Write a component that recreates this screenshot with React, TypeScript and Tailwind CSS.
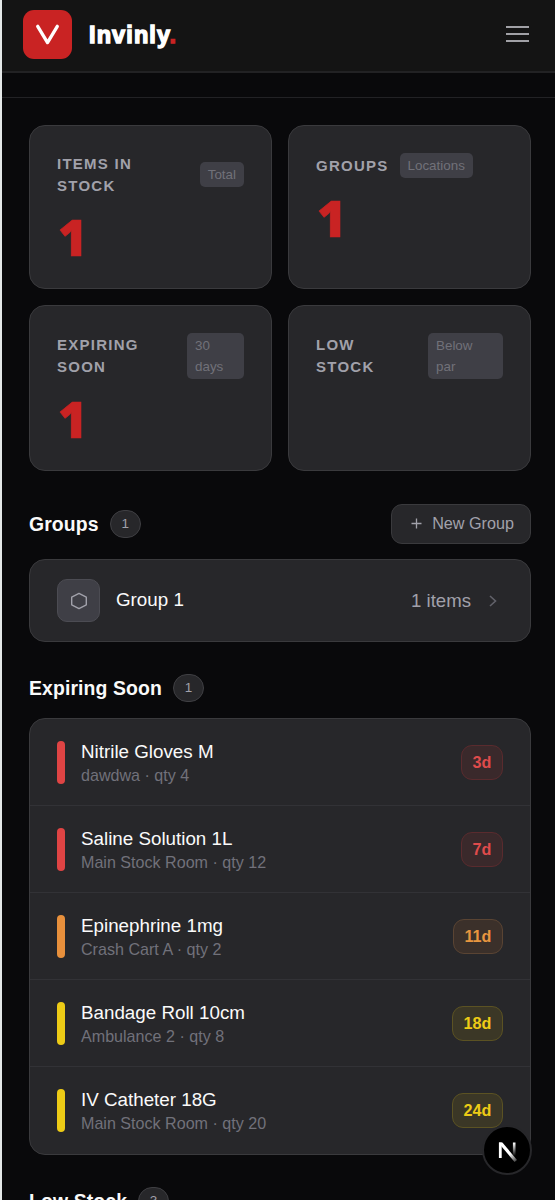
import React from 'react';

interface Stat {
  label: string;
  chip: string;
  value: string;
  chipClass: string;
}

interface ExpiringItem {
  name: string;
  location: string;
  qty: number;
  days: number;
}

interface SectionTitleProps {
  title: string;
  count: number;
}

const stats: Stat[] = [
  { label: 'Items in Stock', chip: 'Total', value: '1', chipClass: '-mt-[2px]' },
  { label: 'Groups', chip: 'Locations', value: '1', chipClass: '' },
  { label: 'Expiring Soon', chip: '30 days', value: '1', chipClass: 'w-[57px]' },
  { label: 'Low Stock', chip: 'Below par', value: '', chipClass: 'w-[75px]' },
];

const expiring: ExpiringItem[] = [
  { name: 'Nitrile Gloves M', location: 'dawdwa', qty: 4, days: 3 },
  { name: 'Saline Solution 1L', location: 'Main Stock Room', qty: 12, days: 7 },
  { name: 'Epinephrine 1mg', location: 'Crash Cart A', qty: 2, days: 11 },
  { name: 'Bandage Roll 10cm', location: 'Ambulance 2', qty: 8, days: 18 },
  { name: 'IV Catheter 18G', location: 'Main Stock Room', qty: 20, days: 24 },
];

const urgency = (days: number) => {
  if (days <= 7) {
    return {
      bar: 'bg-[#df4444]',
      badge: 'text-[#df4b4b] bg-[#3a292b] border-[#5a2b2e]',
    };
  }
  if (days <= 14) {
    return {
      bar: 'bg-[#e8903c]',
      badge: 'text-[#e8963f] bg-[#3b302a] border-[#5a4433]',
    };
  }
  return {
    bar: 'bg-[#edcb16]',
    badge: 'text-[#edcb16] bg-[#3b3726] border-[#5b5223]',
  };
};

const Header: React.FC = () => (
  <header className="flex h-[73px] shrink-0 items-center justify-between border-b-2 border-[#222224] bg-[#141414] pl-[21px] pr-[26px]">
    <div className="flex items-center gap-[17px] pb-[2px]">
      <div className="flex size-[49px] items-center justify-center rounded-[11px] bg-[#c92323]">
        <svg width="49" height="49" viewBox="0 0 49 49" fill="none">
          <path
            d="M14.7 16.3L24.5 32.6L34.3 16.3"
            stroke="#fff"
            strokeWidth="3.3"
            strokeLinecap="round"
            strokeLinejoin="round"
          />
        </svg>
      </div>
      <span className="pt-[3px] text-[23.5px] font-bold leading-none tracking-[1.1px] text-white [-webkit-text-stroke:1.4px_currentColor]">
        Invinly<span className="text-[#c92323]">.</span>
      </span>
    </div>
    <button className="flex w-[23px] flex-col gap-[5px] pb-[3px]">
      <span className="h-[2px] bg-[#a1a1a6]" />
      <span className="h-[2px] bg-[#a1a1a6]" />
      <span className="h-[2px] bg-[#a1a1a6]" />
    </button>
  </header>
);

const StatCard: React.FC<{ stat: Stat }> = ({ stat }) => (
  <div className="rounded-[16px] border border-[#3a3a3d] bg-[#27272a] px-[27px] pt-[27px]">
    <div
      className={
        stat.label === 'Groups'
          ? 'flex items-center gap-[11px]'
          : 'flex items-center justify-between'
      }
    >
      <span className="max-w-[100px] text-[15px] font-bold uppercase leading-[22px] tracking-[1.25px] text-[#a1a1aa]">
        {stat.label}
      </span>
      <span
        className={`rounded-[5px] bg-[#3f3f46] px-[8px] py-[2px] text-[13.4px] leading-[21px] text-[#717179] ${stat.chipClass}`}
      >
        {stat.chip}
      </span>
    </div>
    <div className="mt-[16px] h-[49px] pl-[1px] font-['Open_Sans'] text-[50px] font-extrabold leading-[49px] text-[#c92323] [-webkit-text-stroke:0.6px_currentColor]">
      {stat.value}
    </div>
  </div>
);

const SectionTitle: React.FC<SectionTitleProps> = ({ title, count }) => (
  <div className="flex items-center gap-[11px]">
    <h2 className="text-[19.4px] font-bold leading-[28px] tracking-[0.12px] text-[#fafafa]">{title}</h2>
    <span className="flex h-[28px] w-[31px] items-center justify-center rounded-full border border-[#3f3f43] bg-[#27272a] pt-[1px] text-[13.5px] text-[#a1a1aa]">
      {count}
    </span>
  </div>
);

const ExpiringRow: React.FC<{ item: ExpiringItem }> = ({ item }) => {
  const colors = urgency(item.days);
  return (
    <div className="flex h-[87px] items-center border-b border-[#323236] px-[27px] last:border-b-0">
      <div className={`h-[43px] w-[8px] shrink-0 rounded-full ${colors.bar}`} />
      <div className="ml-[16px] flex-1 pt-[1px]">
        <p className="text-[18.8px] leading-[25px] text-[#fafafa]">{item.name}</p>
        <p className="text-[16.1px] leading-[23px] text-[#71717a]">
          {item.location} · qty {item.qty}
        </p>
      </div>
      <span
        className={`rounded-[11px] border px-[10.5px] text-[16.2px] font-bold leading-[33px] ${colors.badge}`}
      >
        {item.days}d
      </span>
    </div>
  );
};

const App: React.FC = () => {
  return (
    <div className="relative flex h-[1200px] w-[555px] flex-col overflow-hidden border-l-2 border-[#e4e8e8] bg-[#09090b] font-['Liberation_Sans',Arial,sans-serif]">
      <Header />
      <div className="h-[25px] shrink-0 border-b border-[#222225]" />

      <main className="px-[27px] pr-[24px] pt-[27px]">
        {/* Stats */}
        <section className="grid grid-cols-2 grid-rows-[164px_166px] gap-[16px]">
          {stats.map((stat) => (
            <StatCard key={stat.label} stat={stat} />
          ))}
        </section>

        {/* Groups */}
        <section className="mt-[33px]">
          <div className="flex items-center justify-between">
            <SectionTitle title="Groups" count={1} />
            <button className="flex h-[40px] items-center rounded-[11px] border border-[#3a3a3d] bg-[#27272a] pb-[1px] pl-[19px] pr-[16px] text-[16.2px] text-[#a1a1aa]">
              <svg className="mr-[10px]" width="11" height="11" viewBox="0 0 11 11" fill="none">
                <path d="M5.5 0.5V10.5M0.5 5.5H10.5" stroke="currentColor" strokeWidth="1.3" />
              </svg>
              New Group
            </button>
          </div>
          <div className="mt-[15px] flex h-[83px] items-center rounded-[16px] border border-[#3a3a3d] bg-[#27272a] px-[27px]">
            <div className="flex size-[43px] items-center justify-center rounded-[10px] border border-[#4c4c53] bg-[#3f3f46]">
              <svg width="18" height="18" viewBox="0 0 18 18" fill="none">
                <path
                  d="M9 1.4L16.3 5.2V12.8L9 16.6L1.7 12.8V5.2Z"
                  stroke="#a1a1aa"
                  strokeWidth="1.4"
                  strokeLinejoin="round"
                />
              </svg>
            </div>
            <span className="ml-[16px] flex-1 text-[18.8px] text-[#fafafa]">Group 1</span>
            <span className="text-[18.6px] text-[#a1a1aa]">1 items</span>
            <svg className="ml-[17px] mr-[5px]" width="10" height="12" viewBox="0 0 10 12" fill="none">
              <path d="M2 1L7.5 6L2 11" stroke="#62626a" strokeWidth="1.6" />
            </svg>
          </div>
        </section>

        {/* Expiring soon */}
        <section className="mt-[32px]">
          <SectionTitle title="Expiring Soon" count={1} />
          <div className="mt-[16px] overflow-hidden rounded-[16px] border border-[#3a3a3d] bg-[#27272a]">
            {expiring.map((item) => (
              <ExpiringRow key={item.name} item={item} />
            ))}
          </div>
        </section>

        {/* Low stock */}
        <section className="mt-[32px]">
          <SectionTitle title="Low Stock" count={3} />
        </section>
      </main>

      {/* Floating dev badge */}
      <div className="absolute left-[480px] top-[1125px] flex size-[50px] items-center justify-center rounded-full border-2 border-[#27272a] bg-black">
        <svg width="45" height="45" viewBox="0 0 45 45" fill="none">
          <defs>
            <linearGradient id="stem" x1="0" y1="15" x2="0" y2="28" gradientUnits="userSpaceOnUse">
              <stop stopColor="#fff" />
              <stop offset="1" stopColor="#fff" stopOpacity="0" />
            </linearGradient>
            <linearGradient id="diagonal" x1="25" y1="26" x2="32" y2="35" gradientUnits="userSpaceOnUse">
              <stop stopColor="#fff" />
              <stop offset="1" stopColor="#fff" stopOpacity="0.1" />
            </linearGradient>
          </defs>
          <path d="M15.3 30V14.5" stroke="#fff" strokeWidth="2.8" />
          <path d="M14 14.5H17.4L32 32L29.6 34L14 15.5Z" fill="url(#diagonal)" />
          <path d="M29.2 14.5V28" stroke="url(#stem)" strokeWidth="2.6" />
        </svg>
      </div>
    </div>
  );
};

export default App;
